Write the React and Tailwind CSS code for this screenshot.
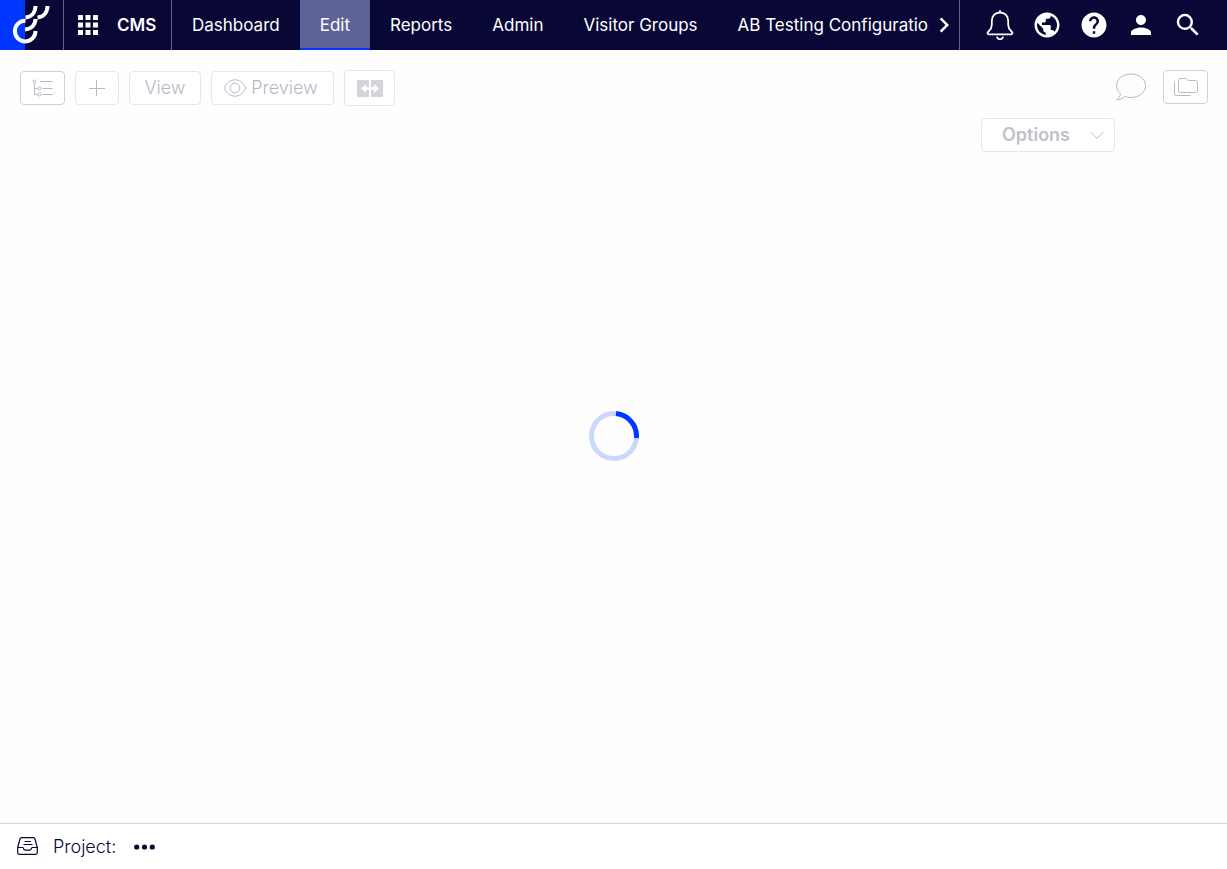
import React from "react";
import { MdApps, MdPublic, MdHelp, MdPerson, MdSearch, MdChevronRight } from "react-icons/md";

const links = ["Dashboard", "Edit", "Reports", "Admin", "Visitor Groups", "AB Testing Configuration"];

function Logo() {
  return (
    <svg viewBox="0 0 63 50" className="h-[50px] w-[63px]" fill="none" stroke="#fff" strokeWidth="4" aria-hidden="true">
      <path d="M0 0h25v50H0z" fill="#0037ff" stroke="none" />
      <path d="M25.5 20.8A10.3 10.3 0 1 0 35.5 31" />
      <path d="M25 29.5C31 29 35.300 25 35.500 19" />
      <path d="M25.500 17.500C31 17 35.300 13 35.500 6" />
      <path d="M37.500 17.500C43 17 47.300 13 47.500 6" />
    </svg>
  );
}

function BellIcon() {
  return (
    <svg viewBox="0 0 28 32" className="h-8 w-7" fill="none" stroke="currentColor" strokeWidth="1.800" strokeLinecap="round" strokeLinejoin="round" aria-hidden="true">
      <path d="M14 1.800v1.500M14 3.500c-5 0-8.200 3.700-8.200 8.500v4c0 3.500-1.300 4.500-3.500 6.700-1.300 1.300-.8 2.600.8 2.600h21.800c1.600 0 2.100-1.300.8-2.600-2.200-2.200-3.500-3.200-3.500-6.700v-4c0-4.800-3.200-8.500-8.200-8.500zM11 28.300c.5 1.300 1.600 2 3 2s2.500-.7 3-2" />
    </svg>
  );
}

function TreeIcon() {
  return (
    <svg viewBox="0 0 22 18" className="h-[18px] w-[22px]" fill="none" stroke="currentColor" aria-hidden="true">
      <path d="M2.500 4v11.500H6M2.500 9.500H6M8 2.500h12.500M10.500 9.500h10M10.500 15.500h10" />
      <circle cx="2.500" cy="2.500" r="1.500" />
      <circle cx="7.500" cy="9.500" r="1.500" />
      <circle cx="7.500" cy="15.500" r="1.500" />
    </svg>
  );
}

function EyeIcon() {
  return (
    <svg viewBox="0 0 24 18" className="h-[18px] w-6" fill="none" stroke="currentColor" aria-hidden="true">
      <path d="M1 9c2.500-5 6.500-8.200 11-8.200S20.500 4 23 9c-2.500 5-6.500 8.200-11 8.200S3.500 14 1 9z" />
      <circle cx="12" cy="9" r="4.800" />
    </svg>
  );
}

function CompareIcon() {
  return (
    <svg viewBox="0 0 26 17" className="h-[17px] w-[26px]" aria-hidden="true">
      <path d="M0 0h12v17H0zM14 0h12v17H14z" fill="#d4d5d9" />
      <path d="M4 8.500 9 4v3h3v3H9v3zM22 8.500 17 4v3h-3v3h3v3z" fill="#fff" />
    </svg>
  );
}

function CommentIcon() {
  return (
    <svg viewBox="0 0 32 28" className="h-7 w-8" fill="none" stroke="currentColor" strokeLinejoin="round" aria-hidden="true">
      <path d="M16 1C7.800 1 1.500 6 1.500 12.600c0 3.300 1.500 6.100 4 8.200-.3 2.400-1.800 4.500-4 6 3 .2 6-1 8.200-3.300 2 .7 4.100 1 6.300 1 8.200 0 14.500-5.300 14.500-11.900S24.200 1 16 1z" />
    </svg>
  );
}

function FoldersIcon() {
  return (
    <svg viewBox="0 0 24 20" className="h-5 w-6" fill="none" stroke="currentColor" strokeLinejoin="round" strokeLinecap="round" aria-hidden="true">
      <path d="M6.500 1.500h5c1.500 0 1.500 2 3 2h7q2 0 2 2v8q0 2-2 2h-15q-2 0-2-2v-10q0-2 2-2z" />
      <path d="M.5 5.500v11q0 2 2 2H16" />
    </svg>
  );
}

function TrayIcon() {
  return (
    <svg viewBox="0 0 21 20" className="h-5 w-[21px]" fill="none" stroke="currentColor" strokeLinejoin="round" aria-hidden="true">
      <path d="M.7 10.500 3 2q.4-1.300 1.700-1.300h11.600Q17.600.7 18 2l2.300 8.500v5q0 1.800-1.800 1.800h-16q-1.800 0-1.800-1.800zM.7 10.500h4.800q1 0 1.200 1.300t1.800 1.300h4q1.600 0 1.800-1.300t1.200-1.300h4.800" strokeWidth="1.200" />
      <path d="M7.500 4.500h6.500M6.500 7.500h9" />
    </svg>
  );
}

function ToolButton({ label, className, children }) {
  return (
    <button type="button" aria-label={label} className={"flex items-center justify-center rounded border bg-white " + className}>
      {children}
    </button>
  );
}

export default function App() {
  return (
    <div className="flex min-h-screen flex-col bg-[#fefefe] font-['Inter',sans-serif] text-lg text-[#080736]">
      <header className="flex h-[50px] bg-[#080736] text-[17px] text-white">
        <a href="#home" aria-label="Home" className="shrink-0 border-r border-[#5e6397]">
          <Logo />
        </a>
        <button type="button" className="flex w-[108px] shrink-0 items-center gap-3.5 border-r border-[#5e6397] pl-[9px] font-semibold">
          <MdApps size={30} />
          CMS
        </button>
        <nav className="flex min-w-0 flex-1 border-r border-[#5e6397]">
          <div className="flex min-w-0 flex-1 overflow-hidden">
            {links.map((link) => (
              <a
                key={link}
                href="#section"
                aria-current={link === "Edit" ? "page" : undefined}
                className={"flex shrink-0 items-center border-b-2 px-5 pt-0.5 whitespace-nowrap " + (link === "Edit" ? "border-[#0037ff] bg-[#5e6397]" : "border-transparent")}
              >
                {link}
              </a>
            ))}
          </div>
          <button type="button" aria-label="More sections" className="flex w-[30px] shrink-0 items-center justify-center">
            <MdChevronRight size={30} className="shrink-0" />
          </button>
        </nav>
        <div className="flex shrink-0 pr-4 pl-4">
          <button type="button" aria-label="Notifications" className="flex w-[47px] items-center justify-center"><BellIcon /></button>
          <button type="button" aria-label="Language" className="flex w-[47px] items-center justify-center"><MdPublic size={30} /></button>
          <button type="button" aria-label="Help" className="flex w-[47px] items-center justify-center"><MdHelp size={30} /></button>
          <button type="button" aria-label="Account" className="flex w-[47px] items-center justify-center"><MdPerson size={30} /></button>
          <button type="button" aria-label="Search" className="flex w-[47px] items-center justify-center"><MdSearch size={30} /></button>
        </div>
      </header>

      <div className="flex items-start justify-between pt-5 pr-[19px] pl-5 font-light text-[#b8b8c6]">
        <div className="flex items-center gap-2.5">
          <ToolButton label="Navigation tree" className="h-[34px] w-[45px] border-[#ced0d3]"><TreeIcon /></ToolButton>
          <ToolButton label="Create" className="h-[34px] w-11 border-[#e6e7ea]">
            <svg viewBox="0 0 16 16" className="size-4" fill="none" stroke="currentColor" aria-hidden="true"><path d="M7.500 0v16M0 8.500h16" /></svg>
          </ToolButton>
          <ToolButton className="h-[34px] w-[72px] border-[#e6e7ea]">View</ToolButton>
          <ToolButton className="h-[34px] w-[123px] gap-1 border-[#e6e7ea] pr-1"><EyeIcon />Preview</ToolButton>
          <ToolButton label="Compare" className="h-9 w-[51px] border-[#e6e7ea]"><CompareIcon /></ToolButton>
        </div>
        <div className="flex items-center gap-4">
          <button type="button" aria-label="Comments"><CommentIcon /></button>
          <ToolButton label="Assets" className="h-[34px] w-[45px] border-[#ced0d3]"><FoldersIcon /></ToolButton>
        </div>
      </div>

      <div className="flex justify-end pt-3 pr-28">
        <button type="button" className="flex h-[34px] w-[134px] items-center justify-between rounded border border-[#e6e7ea] bg-white pr-2.5 pl-5 font-semibold text-[#c0c0cc]">
          Options
          <svg viewBox="0 0 14 8" className="h-2 w-3.5" fill="none" stroke="#b8b8c6" aria-hidden="true"><path d="m.5.8 6.500 6.500L13.500.8" /></svg>
        </button>
      </div>

      <main className="flex flex-1 items-center justify-center pb-[103px]">
        <svg viewBox="0 0 50 50" className="size-[50px]" fill="none" strokeWidth="5" role="img" aria-label="Loading">
          <circle cx="25" cy="25" r="22.500" stroke="#ccd7ff" />
          <path d="M27 2.600A22.500 22.500 0 0 1 47.400 27" stroke="#0037ff" />
        </svg>
      </main>

      <footer className="flex h-[46px] items-center border-t border-[#d4d5d9] bg-white pl-[17px] font-light">
        <TrayIcon />
        <span className="ml-[15px]">Project:</span>
        <button type="button" aria-label="Project options" className="ml-[18px]">
          <svg viewBox="0 0 21 6" className="h-1.5 w-[21px]" fill="currentColor" aria-hidden="true">
            <circle cx="2.700" cy="3" r="2.600" /><circle cx="10.500" cy="3" r="2.600" /><circle cx="18.300" cy="3" r="2.600" />
          </svg>
        </button>
      </footer>
    </div>
  );
}
